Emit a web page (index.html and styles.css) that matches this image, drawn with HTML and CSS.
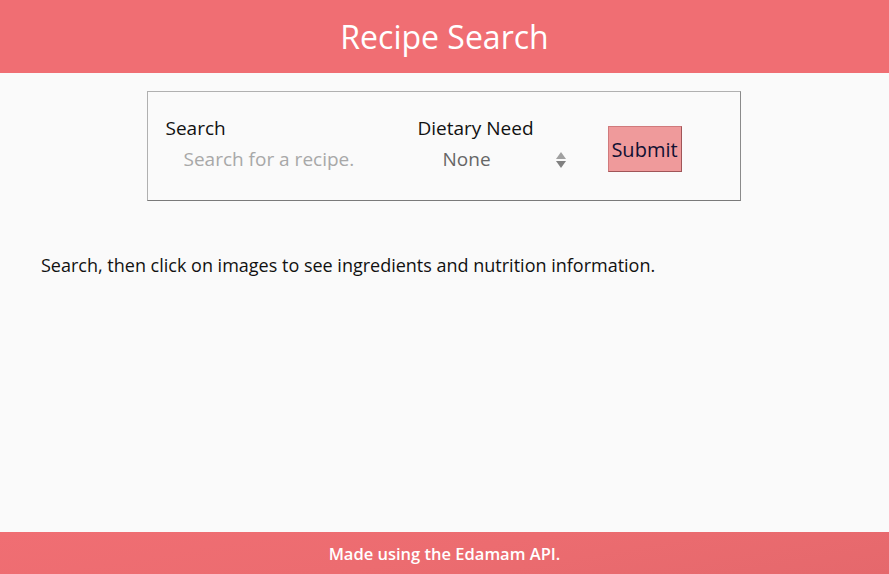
FILE: index.html
```html
<!DOCTYPE html>
<html lang="en">
<head>
<meta charset="utf-8">
<title>Recipe Search</title>
<link rel="stylesheet" href="styles.css">
</head>
<body>
<div class="page">
  <header class="site-header">
    <h1 class="title">Recipe Search</h1>
  </header>
  <main class="main">
    <form class="search-box" onsubmit="return false">
      <div class="field field-search">
        <label class="label" for="q">Search</label>
        <input class="input" id="q" type="text" placeholder="Search for a recipe.">
      </div>
      <div class="field field-diet">
        <label class="label" for="diet">Dietary Need</label>
        <div class="select-wrap">
          <select class="select" id="diet">
            <option>None</option>
          </select>
          <svg class="arrows" width="10" height="18" viewBox="0 0 10 18" aria-hidden="true">
            <polygon points="5,1 10,8 0,8" fill="#a0a0a0"/>
            <polygon points="0,10 10,10 5,17" fill="#808080"/>
          </svg>
        </div>
      </div>
      <button class="submit" type="submit">Submit</button>
    </form>
    <p class="hint">Search, then click on images to see ingredients and nutrition information.</p>
  </main>
  <footer class="site-footer">Made using the Edamam API.</footer>
</div>
</body>
</html>
```
FILE: styles.css
```css
html, body {
  margin: 0;
  padding: 0;
  height: 100%;
}
body {
  background: #fafafa;
  font-family: "Open Sans", "Noto Sans", sans-serif;
  color: #111;
}
.page {
  display: flex;
  flex-direction: column;
  min-height: 100vh;
}
.site-header {
  background: #f06e73;
  height: 73px;
  display: flex;
  align-items: center;
  justify-content: center;
}
.title {
  margin: 0;
  color: #fff;
  font-weight: 400;
  font-size: 32px;
  line-height: 1;
}
.main {
  flex: 1;
  display: flex;
  flex-direction: column;
  align-items: flex-start;
}
.search-box {
  align-self: center;
  box-sizing: border-box;
  width: 594px;
  height: 110px;
  margin: 18px 0 0 -2px;
  border: 1px solid #b0b0b0;
  border-bottom-color: #7a7a7a;
  border-right-color: #8a8a8a;
  padding: 23px 0 0 18px;
  display: flex;
  align-items: flex-start;
}
.field {
  display: flex;
  flex-direction: column;
}
.field-search {
  width: 252px;
}
.field-diet {
  width: 160px;
}
.label {
  font-size: 19px;
  line-height: 26px;
  color: #111;
}
.input {
  border: none;
  background: transparent;
  font-family: inherit;
  font-size: 19px;
  line-height: 26px;
  height: 26px;
  padding: 5px 0 4px 18px;
  margin: 0;
  width: 230px;
  outline: none;
  color: #333;
}
.input::placeholder {
  color: #a8a8a8;
}
.select-wrap {
  display: flex;
  align-items: center;
  width: 160px;
  padding-top: 3px;
}
.select {
  -webkit-appearance: none;
  appearance: none;
  border: none;
  background: transparent;
  font-family: inherit;
  font-size: 19px;
  line-height: 26px;
  height: 30px;
  color: #666;
  padding: 0 0 0 25px;
  margin: 0;
  flex: 1;
  outline: none;
}
.arrows {
  display: block;
  margin-right: 12px;
  margin-top: 2px;
}
.submit {
  margin: 11px 0 0 30px;
  width: 74px;
  height: 46px;
  box-sizing: border-box;
  background: #ef9a9b;
  border: 1px solid #d07a7c;
  border-right-color: #a05558;
  border-bottom-color: #a05558;
  font-family: inherit;
  font-size: 20px;
  color: #111133;
  padding: 0;
  cursor: pointer;
}
.hint {
  margin: 51px 0 0 41px;
  font-size: 18px;
  line-height: 26px;
  color: #111;
}
.site-footer {
  height: 42px;
  background: linear-gradient(170deg, #f06e73 0%, #ec6c70 50%, #e5686c 100%);
  color: #fff;
  font-size: 16.5px;
  font-weight: 600;
  display: flex;
  align-items: center;
  justify-content: center;
}
```
